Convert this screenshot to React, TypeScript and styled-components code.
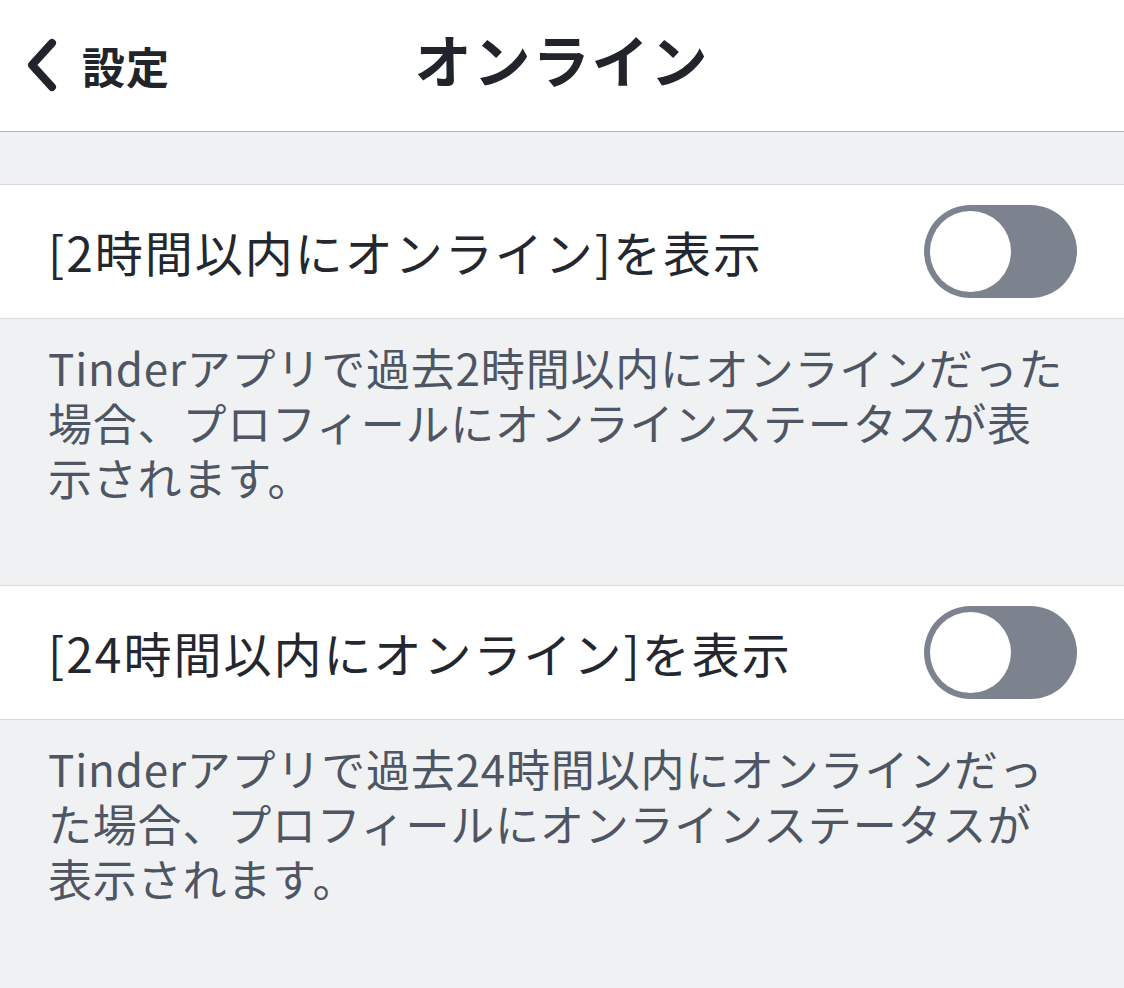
import styled, { createGlobalStyle } from 'styled-components';

const GlobalStyle = createGlobalStyle`
  html, body {
    margin: 0;
    padding: 0;
    background: #f0f1f3;
  }
  body {
    font-family: "Noto Sans CJK JP", "Noto Sans", sans-serif;
    -webkit-font-smoothing: antialiased;
  }
`;

const Screen = styled.div`
  width: 1124px;
  min-height: 988px;
  background: #f0f1f3;
  display: flex;
  flex-direction: column;
`;

const Header = styled.header`
  height: 131px;
  background: #ffffff;
  border-bottom: 1px solid #b4b4b6;
  display: grid;
  grid-template-columns: 1fr auto 1fr;
  align-items: center;
  padding: 0 24px;
`;

const BackButton = styled.button`
  display: flex;
  align-items: center;
  gap: 22px;
  background: none;
  border: none;
  padding: 0;
  margin-top: -2px;
  cursor: pointer;
  color: #21252b;
  font-family: inherit;
  font-size: 43px;
  font-weight: 700;
  letter-spacing: 1px;
  justify-self: start;
`;

const Title = styled.h1`
  margin: 0;
  margin-top: -16px;
  font-size: 57px;
  font-weight: 700;
  letter-spacing: 2px;
  color: #21252b;
`;

const Spacer = styled.div`
  height: 52px;
  border-bottom: 1px solid #d9dadd;
`;

const Row = styled.div`
  height: 133px;
  background: #ffffff;
  display: flex;
  align-items: center;
  justify-content: space-between;
  padding: 0 47px 0 48px;
  border-bottom: 1px solid #d9dadd;
`;

const RowLabel = styled.span`
  font-size: 48px;
  letter-spacing: 2px;
  color: #24282e;
  margin-top: -2px;
`;

const Track = styled.button<{ $on?: boolean }>`
  width: 153px;
  height: 93px;
  border: none;
  border-radius: 47px;
  background: ${(p) => (p.$on ? '#fd5068' : '#7c838e')};
  padding: 6px;
  display: flex;
  justify-content: ${(p) => (p.$on ? 'flex-end' : 'flex-start')};
  cursor: pointer;
`;

const Knob = styled.span`
  width: 81px;
  height: 81px;
  border-radius: 50%;
  background: #ffffff;
`;

const Note = styled.p<{ $last?: boolean }>`
  margin: 0;
  padding: 21px 55px 80px 48px;
  font-size: 44px;
  line-height: 55px;
  letter-spacing: 0.8px;
  color: #4e5563;
  border-bottom: ${(p) => (p.$last ? 'none' : '1px solid #d9dadd')};
`;

const Chevron = () => (
  <svg width="36" height="56" viewBox="0 0 36 56" fill="none">
    <path d="M28 6 L8 28 L28 50" stroke="#21252b" strokeWidth="8" strokeLinecap="round" strokeLinejoin="round" />
  </svg>
);

const settings = [
  {
    label: '[2時間以内にオンライン]を表示',
    note: 'Tinderアプリで過去2時間以内にオンラインだった場合、プロフィールにオンラインステータスが表示されます。',
  },
  {
    label: '[24時間以内にオンライン]を表示',
    note: 'Tinderアプリで過去24時間以内にオンラインだった場合、プロフィールにオンラインステータスが表示されます。',
  },
];

export default function App() {
  return (
    <>
      <GlobalStyle />
      <Screen>
        <Header>
          <BackButton>
            <Chevron />
            設定
          </BackButton>
          <Title>オンライン</Title>
          <div />
        </Header>
        <Spacer />
        {settings.map((s, i) => (
          <div key={s.label}>
            <Row>
              <RowLabel>{s.label}</RowLabel>
              <Track aria-label={s.label}>
                <Knob />
              </Track>
            </Row>
            <Note $last={i === settings.length - 1}>{s.note}</Note>
          </div>
        ))}
      </Screen>
    </>
  );
}
